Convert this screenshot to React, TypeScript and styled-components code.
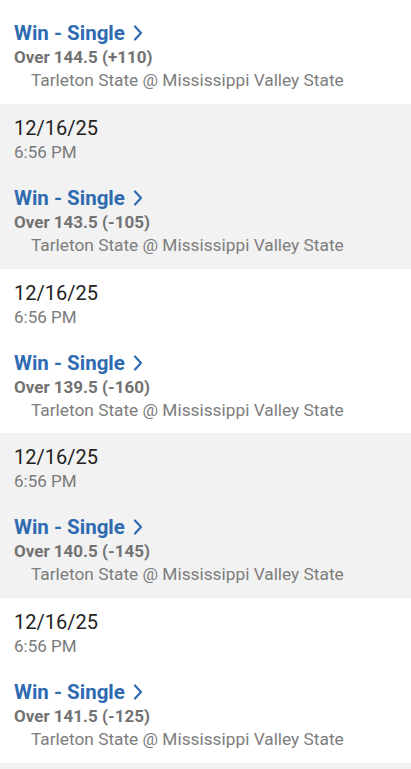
import styled, { createGlobalStyle } from 'styled-components';

type Bet = {
  line: string;
  matchup: string;
  date: string;
  time: string;
};

const bets: Bet[] = [
  { line: 'Over 144.5 (+110)', matchup: 'Tarleton State @ Mississippi Valley State', date: '12/16/25', time: '6:56 PM' },
  { line: 'Over 143.5 (-105)', matchup: 'Tarleton State @ Mississippi Valley State', date: '12/16/25', time: '6:56 PM' },
  { line: 'Over 139.5 (-160)', matchup: 'Tarleton State @ Mississippi Valley State', date: '12/16/25', time: '6:56 PM' },
  { line: 'Over 140.5 (-145)', matchup: 'Tarleton State @ Mississippi Valley State', date: '12/16/25', time: '6:56 PM' },
  { line: 'Over 141.5 (-125)', matchup: 'Tarleton State @ Mississippi Valley State', date: '12/16/25', time: '6:56 PM' },
];

function Chevron() {
  return (
    <svg width="10" height="16" viewBox="0 0 10 16" fill="none">
      <polyline
        points="2,1.5 8,8 2,14.5"
        stroke="#2e6bb1"
        strokeWidth="2.2"
        strokeLinecap="round"
        strokeLinejoin="round"
      />
    </svg>
  );
}

// the list is scrolled: the first row's date has gone above the top edge
function BetRow({ bet, shaded, scrolled }: { bet: Bet; shaded: boolean; scrolled?: boolean }) {
  return (
    <Row shaded={shaded} scrolled={scrolled}>
      {!scrolled && (
        <>
          <DateText>{bet.date}</DateText>
          <TimeText>{bet.time}</TimeText>
        </>
      )}
      <Title>
        Win - Single
        <Chevron />
      </Title>
      <LineText>{bet.line}</LineText>
      <Matchup>{bet.matchup}</Matchup>
    </Row>
  );
}

export default function App() {
  return (
    <>
      <GlobalStyle />
      <List>
        {bets.map((bet, i) => (
          <BetRow key={bet.line} bet={bet} shaded={i % 2 === 1} scrolled={i === 0} />
        ))}
        <NextRow />
      </List>
    </>
  );
}

const GlobalStyle = createGlobalStyle`
  html, body {
    margin: 0;
    padding: 0;
    background: #ffffff;
    overflow: hidden;
  }
  body {
    font-family: Roboto, 'Noto Sans', Arial, sans-serif;
  }
`;

const List = styled.div`
  display: flex;
  flex-direction: column;
`;

const Row = styled.div<{ shaded: boolean; scrolled?: boolean }>`
  display: flex;
  flex-direction: column;
  padding: ${p => (p.scrolled ? '21px' : '12px')} 14px 11.75px;
  background: ${p => (p.shaded ? '#f2f2f2' : '#ffffff')};
`;

const NextRow = styled.div`
  height: 12px;
  background: #f2f2f2;
`;

const DateText = styled.div`
  font-size: 20px;
  line-height: 24px;
  color: #222222;
`;

const TimeText = styled.div`
  font-size: 17px;
  line-height: 25px;
  color: #7a7a7a;
  margin-bottom: 21px;
`;

const Title = styled.div`
  display: flex;
  align-items: center;
  gap: 8px;
  font-size: 20.5px;
  font-weight: 700;
  line-height: 24px;
  color: #2e6bb1;
`;

const LineText = styled.div`
  font-size: 17px;
  font-weight: 700;
  line-height: 23px;
  margin-top: 1px;
  color: #727272;
`;

const Matchup = styled.div`
  font-size: 17.3px;
  line-height: 23px;
  color: #7d7d7d;
  padding-left: 17px;
`;
